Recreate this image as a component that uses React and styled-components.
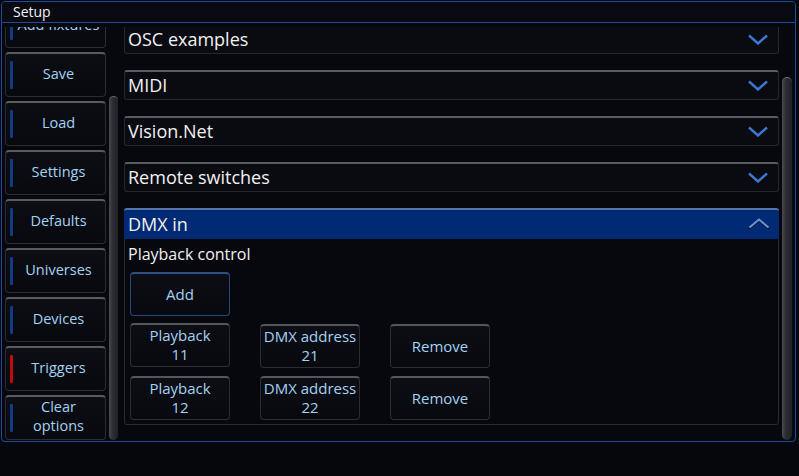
import React from "react";
import styled, { createGlobalStyle } from "styled-components";

const GlobalStyle = createGlobalStyle`
  html, body {
    margin: 0;
    padding: 0;
    background: #06070c;
    font-family: "Open Sans", "Noto Sans", sans-serif;
  }
  * { box-sizing: border-box; }
`;

const sideItems = [
  { label: "Add fixtures" },
  { label: "Save" },
  { label: "Load" },
  { label: "Settings" },
  { label: "Defaults" },
  { label: "Universes" },
  { label: "Devices" },
  { label: "Triggers", active: true },
  { label: "Clear options" },
];

const sections = ["OSC examples", "MIDI", "Vision.Net", "Remote switches"];

const mappings = [
  { playback: 11, address: 21 },
  { playback: 12, address: 22 },
];

export default function App() {
  return (
    <>
      <GlobalStyle />
      <Window>
        <TitleBar>Setup</TitleBar>
        <Body>
          <SideViewport>
            <SideList>
              {sideItems.map((item) => (
                <SideButton key={item.label} $active={item.active}>
                  <span>{item.label}</span>
                </SideButton>
              ))}
            </SideList>
          </SideViewport>
          <Track $width={9} $top={69}>
            <Thumb />
          </Track>
          <MainViewport>
            <SectionList>
              {sections.map((name) => (
                <Section key={name}>
                  <SectionTitle>{name}</SectionTitle>
                  <ChevronDown />
                </Section>
              ))}
              <OpenSection>
                <OpenHeader>
                  <SectionTitle>DMX in</SectionTitle>
                  <ChevronUp />
                </OpenHeader>
                <OpenBody>
                  <GroupLabel>Playback control</GroupLabel>
                  <ButtonGrid>
                    <PanelButton $focused>Add</PanelButton>
                    <span />
                    <span />
                    {mappings.map((m) => (
                      <React.Fragment key={m.playback}>
                        <PanelButton>
                          Playback
                          <br />
                          {m.playback}
                        </PanelButton>
                        <PanelButton>
                          DMX address
                          <br />
                          {m.address}
                        </PanelButton>
                        <PanelButton>Remove</PanelButton>
                      </React.Fragment>
                    ))}
                  </ButtonGrid>
                </OpenBody>
              </OpenSection>
            </SectionList>
          </MainViewport>
          <Track $width={10} $top={50}>
            <Thumb />
          </Track>
        </Body>
      </Window>
    </>
  );
}

function ChevronDown() {
  return (
    <Chevron width="20" height="11" viewBox="0 0 20 11">
      <polyline points="1,1.5 10,9.5 19,1.5" fill="none" stroke="#3b78d4" strokeWidth="2.4" />
    </Chevron>
  );
}

function ChevronUp() {
  return (
    <Chevron width="22" height="12" viewBox="0 0 22 12">
      <polyline points="1,11 11,2.5 21,11" fill="none" stroke="#0a1630" strokeWidth="2.2" />
      <polyline points="1.5,9.5 11,1.5 20.5,9.5" fill="none" stroke="#6a95d8" strokeWidth="2" />
    </Chevron>
  );
}

const Window = styled.div`
  margin: 1px 0 0 1px;
  width: 795px;
  height: 441px;
  border: 1px solid #1e4b9c;
  border-radius: 4px;
  background: #07080e;
  display: flex;
  flex-direction: column;
  overflow: hidden;
`;

const TitleBar = styled.div`
  height: 21px;
  flex: none;
  border-bottom: 1px solid #1e4b9c;
  background: #090a12;
  color: #f2f2f2;
  font-size: 14px;
  line-height: 19px;
  padding-left: 11px;
`;

const Body = styled.div`
  flex: 1;
  display: flex;
  padding: 4px 3px 1px 3px;
  min-height: 0;
`;

const SideViewport = styled.div`
  width: 101px;
  flex: none;
  overflow: hidden;
`;

const SideList = styled.div`
  margin-top: -24px;
  display: flex;
  flex-direction: column;
  gap: 4px;
`;

const SideButton = styled.div`
  height: 45px;
  flex: none;
  position: relative;
  display: flex;
  align-items: center;
  justify-content: center;
  padding: 0 0 4px 6px;
  border-radius: 4px;
  border: 1px solid #2c2d33;
  border-top: 2px solid #5a5b61;
  background: linear-gradient(#0d0e15, #08090e);
  color: #a3d2f2;
  font-size: 14.5px;
  line-height: 19px;
  text-align: center;

  span {
    max-width: 86px;
  }

  &::before {
    content: "";
    position: absolute;
    left: 4px;
    top: 7px;
    bottom: 7px;
    width: 3px;
    border-radius: 1px;
    background: ${(p) => (p.$active ? "#c20a0a" : "#123b85")};
  }
`;

const Track = styled.div`
  width: ${(p) => p.$width}px;
  flex: none;
  margin-left: 3px;
  padding-top: ${(p) => p.$top}px;
  display: flex;
  flex-direction: column;
`;

const Thumb = styled.div`
  flex: 1;
  border-radius: 5px;
  background: linear-gradient(90deg, #4b4c53 0%, #2e2f36 35%, #1f2026 100%);
  border-top: 1px solid #6a6b72;
`;

const MainViewport = styled.div`
  flex: 1;
  margin-left: 6px;
  overflow: hidden;
`;

const SectionList = styled.div`
  margin-top: -3px;
  display: flex;
  flex-direction: column;
  gap: 16px;
`;

const Section = styled.div`
  height: 30px;
  display: flex;
  align-items: center;
  justify-content: space-between;
  padding: 0 10px 2px 3px;
  border-radius: 3px;
  border: 1px solid #26272d;
  border-top: 2px solid #5b5c62;
  background: #0a0b11;

  svg {
    margin-top: 2px;
  }
`;

const SectionTitle = styled.div`
  color: #f1f1f1;
  font-size: 18px;
  line-height: 22px;
`;

const Chevron = styled.svg`
  display: block;
  flex: none;
`;

const OpenSection = styled.div`
  display: flex;
  flex-direction: column;
  border-radius: 3px;
  border: 1px solid #2a2b31;
  background: #07080e;
`;

const OpenHeader = styled.div`
  height: 31px;
  display: flex;
  align-items: center;
  justify-content: space-between;
  padding: 0 9px 2px 4px;
  margin: -1px -1px 0 -1px;
  border-top: 2px solid #5873a8;
  border-radius: 3px 3px 0 0;
  background: #002a73;
`;

const OpenBody = styled.div`
  padding: 5px 0 4px 4px;
`;

const GroupLabel = styled.div`
  color: #f1f1f1;
  font-size: 16px;
  line-height: 20px;
  margin-left: -1px;
`;

const ButtonGrid = styled.div`
  display: grid;
  grid-template-columns: repeat(3, 100px);
  column-gap: 30px;
  row-gap: 8px;
  margin-top: 8px;
  margin-left: 1px;

  & > :nth-child(4) {
    margin-top: -1px;
  }
`;

const PanelButton = styled.div`
  height: 44px;
  display: flex;
  align-items: center;
  justify-content: center;
  text-align: center;
  padding-bottom: 1px;
  border-radius: 4px;
  border: 1px solid ${(p) => (p.$focused ? "#27467a" : "#2c2d33")};
  border-top: 2px solid ${(p) => (p.$focused ? "#2f4f86" : "#55565c")};
  background: linear-gradient(#0d0e15, #08090e);
  color: #a3d2f2;
  font-size: 15px;
  line-height: 19px;
`;
